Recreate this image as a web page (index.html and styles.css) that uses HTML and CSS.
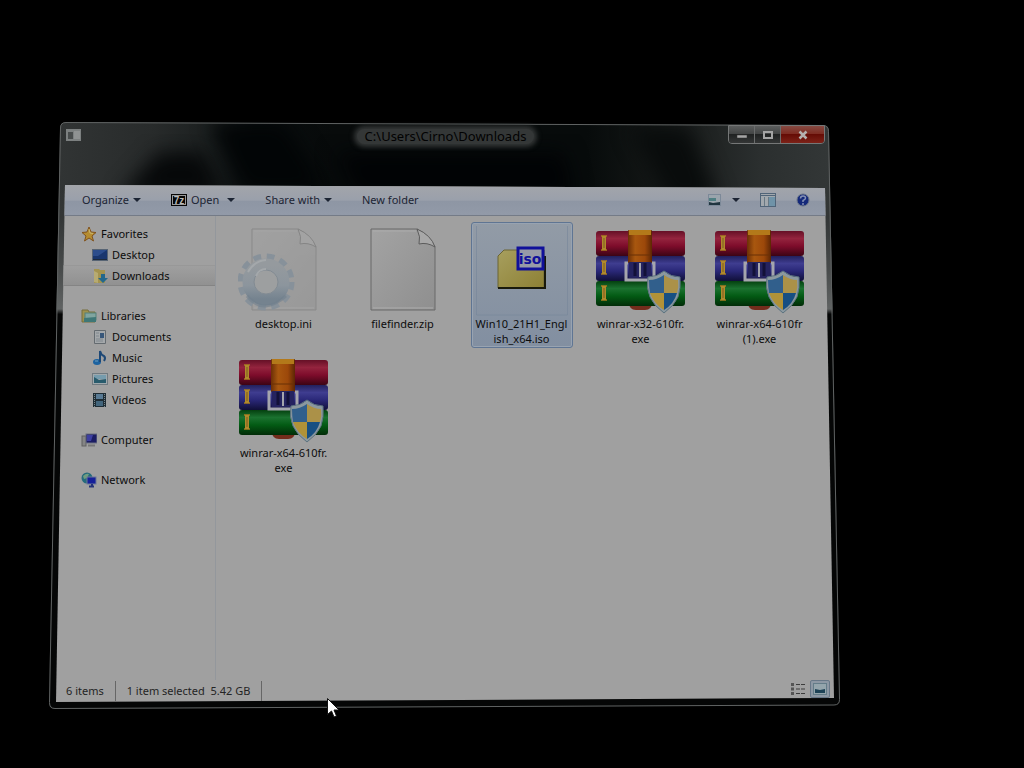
FILE: index.html
```
<!DOCTYPE html>
<html lang="en">

<head>
    <meta charset="UTF-8">
    <meta name="viewport" content="width=device-width, initial-scale=1.0">
    <title>Downloads</title>
    <link rel="stylesheet" href="styles.css">
</head>

<body>
    <!-- shared icons -->
    <svg class="defs" width="0" height="0" aria-hidden="true">
        <defs>
            <linearGradient id="red" x1="0" y1="0" x2="0" y2="1">
                <stop offset="0" stop-color="#651026" />
                <stop offset=".3" stop-color="#94243e" />
                <stop offset=".6" stop-color="#7e0c2b" />
                <stop offset="1" stop-color="#3c0414" />
            </linearGradient>
            <linearGradient id="blue" x1="0" y1="0" x2="0" y2="1">
                <stop offset="0" stop-color="#22205c" />
                <stop offset=".3" stop-color="#3f3d90" />
                <stop offset=".6" stop-color="#2a2878" />
                <stop offset="1" stop-color="#100f38" />
            </linearGradient>
            <linearGradient id="green" x1="0" y1="0" x2="0" y2="1">
                <stop offset="0" stop-color="#04400f" />
                <stop offset=".3" stop-color="#1b7230" />
                <stop offset=".6" stop-color="#035b14" />
                <stop offset="1" stop-color="#022c08" />
            </linearGradient>
            <linearGradient id="belt" x1="0" y1="0" x2="1" y2="0">
                <stop offset="0" stop-color="#6b2f06" />
                <stop offset=".3" stop-color="#a8570f" />
                <stop offset=".7" stop-color="#9c480a" />
                <stop offset="1" stop-color="#5c2604" />
            </linearGradient>
            <linearGradient id="paper" x1="0" y1="0" x2="1" y2="1">
                <stop offset="0" stop-color="#a3a3a3" />
                <stop offset="1" stop-color="#8f8f8f" />
            </linearGradient>
            <linearGradient id="gear" x1="0" y1="0" x2="0" y2="1">
                <stop offset="0" stop-color="#959a9e" />
                <stop offset=".6" stop-color="#8c959d" />
                <stop offset="1" stop-color="#75838f" />
            </linearGradient>
            <linearGradient id="folder" x1="0" y1="0" x2="1" y2="1">
                <stop offset="0" stop-color="#a79f5e" />
                <stop offset="1" stop-color="#8d8034" />
            </linearGradient>
            <symbol id="winrar" viewBox="0 0 92 90">
                <path d="M34 76h23q0 8-7 8h-9q-7 0-7-8z" fill="#742c1c" />
                <rect x="1" y="5" width="89" height="25" rx="3" fill="url(#red)" />
                <rect x="1" y="30" width="89" height="25" rx="3" fill="url(#blue)" />
                <rect x="1" y="55" width="89" height="25" rx="3" fill="url(#green)" />
                <path d="M6 10h6M6 24h6M6 35h6M6 48h6M6 60h6M6 74h6" stroke="#a87b20" stroke-width="1.5" />
                <path d="M9 10v14M9 35v13M9 60v14" stroke="#b08a2c" stroke-width="4" />
                <path d="M9 12v10M9 37v9M9 62v10" stroke="#7c5c20" />
                <rect x="33" y="4" width="24" height="33" rx="1" fill="url(#belt)" />
                <rect x="34" y="4" width="22" height="5" fill="#b3791a" />
                <path d="M34 29h22" stroke="#693006" />
                <rect x="34" y="36" width="22" height="16" fill="#25235f" />
                <path d="M33 37h-2v17h28V37h-2" fill="none" stroke="#a5a5ad" stroke-width="3" />
                <path d="M40 37v13M50 37v13" stroke="#131138" stroke-width="3" />
                <path d="M45 37v14" stroke="#a5a5ad" stroke-width="2" />
                <path d="M69 45q7 6 16 6 1 11-2 20-4 9-14 16-10-7-14-16-4-9-2-20 9 0 16-6z" fill="#8b989f" stroke="#5c7380" />
                <path d="M69 49v18H55q-1-6-1-13 8 0 15-5z" fill="#315f8c" />
                <path d="M69 49q7 5 14 5 1 7-1 13H69z" fill="#ab9148" />
                <path d="M55 67h14v17q-10-6-14-17z" fill="#b09238" />
                <path d="M69 67h13q-3 11-13 17z" fill="#174f82" />
            </symbol>
            <symbol id="sheet" viewBox="0 0 92 90">
                <path d="M14 3h46q12 6 18 18v63H14z" fill="url(#paper)" stroke="#686868" />
                <path d="M60 3q4 8 2 15 8-2 16 3-4-12-18-18z" fill="#a8a8a8" stroke="#5c5c5c" />
                <path d="M16 5h43M16 82h60" stroke="#acacac" />
            </symbol>
        </defs>
    </svg>

    <main class="window">
        <!-- glass frame -->
        <svg class="glass" viewBox="0 0 791 587" preserveAspectRatio="none" aria-hidden="true">
            <defs>
                <linearGradient id="glassFill" x1="0" y1="0" x2="1" y2="0">
                    <stop offset="0" stop-color="#323535" />
                    <stop offset=".13" stop-color="#282b2b" />
                    <stop offset=".2" stop-color="#1c2020" />
                    <stop offset=".26" stop-color="#0a0e0f" />
                    <stop offset=".36" stop-color="#080b0b" />
                    <stop offset=".68" stop-color="#070b0b" />
                    <stop offset=".78" stop-color="#161918" />
                    <stop offset=".9" stop-color="#2b2f2f" />
                    <stop offset="1" stop-color="#343838" />
                </linearGradient>
                <linearGradient id="side" x1="0" y1="0" x2="0" y2="1">
                    <stop offset="0" stop-color="#333636" stop-opacity="0" />
                    <stop offset=".06" stop-color="#333636" />
                    <stop offset=".16" stop-color="#484b4b" />
                    <stop offset=".235" stop-color="#606363" />
                    <stop offset=".245" stop-color="#050606" />
                    <stop offset="1" stop-color="#050606" />
                </linearGradient>
                <filter id="soft" x="-40%" y="-40%" width="180%" height="180%" color-interpolation-filters="sRGB">
                    <feGaussianBlur stdDeviation="10" />
                </filter>
                <clipPath id="frameClip">
                    <path d="M11 6q0-6 6-6l757 3q6 0 6 6l11 568q0 6-6 6l-779 4q-6 0-6-6z" />
                </clipPath>
            </defs>
            <g clip-path="url(#frameClip)">
                <rect width="791" height="587" fill="url(#glassFill)" />
                <path d="M70 75L110 30l45 0 20 45z" fill="#060809" filter="url(#soft)" />
                <path d="M160 0h75l45 70h-85z" fill="#020506" filter="url(#soft)" />
                <path d="M285 30h230l10 45h-215z" fill="#010305" filter="url(#soft)" />
                <path d="M670 80L640 5h-60l40 75z" fill="#090c0c" filter="url(#soft)" />
                <path d="M0 64h791v523H0z" fill="url(#side)" />
            </g>
            <path d="M11.500 6q0-5.500 5.500-5.500l757 3q5.500 0 5.500 6l11 568q0 5.500-5.500 5.500l-779 3.500q-5.500 0-5.500-6z" fill="none" stroke="#606363" />
        </svg>

        <header class="titlebar">
            <svg class="app-icon" width="15" height="12" viewBox="0 0 15 12" aria-hidden="true">
                <rect width="15" height="12" fill="#7c8080" />
                <rect x="2" y="3" width="5" height="7" fill="#484c4c" />
                <rect x="8" y="2" width="6" height="8" fill="#8f9292" />
            </svg>
            <h1 class="title">C:\Users\Cirno\Downloads</h1>
            <div class="controls">
                <button type="button" class="control" aria-label="Minimize">
                    <svg width="12" height="12" viewBox="0 0 12 12"><rect x="1" y="6" width="10" height="3" fill="#a4a4a4" stroke="#333" stroke-width=".5" /></svg>
                </button>
                <button type="button" class="control" aria-label="Maximize">
                    <svg width="12" height="12" viewBox="0 0 12 12"><rect x="2" y="3" width="8" height="6" fill="none" stroke="#a4a4a4" stroke-width="2" /></svg>
                </button>
                <button type="button" class="control close" aria-label="Close">
                    <svg width="12" height="12" viewBox="0 0 12 12"><path d="M2.500 2.500l7 7M9.500 2.500l-7 7" stroke="#b5b0ae" stroke-width="2.500" /></svg>
                </button>
            </div>
        </header>

        <div class="client">
            <div class="toolbar">
                <button type="button" class="tool organize">Organize <span class="arrow"></span></button>
                <button type="button" class="tool open">
                    <svg width="16" height="12" viewBox="0 0 16 12" aria-hidden="true">
                        <rect width="16" height="12" fill="#050505" />
                        <rect x="1.500" y="1.500" width="13" height="9" fill="none" stroke="#999" />
                        <text class="seven" x="8" y="9.500" text-anchor="middle">7z</text>
                    </svg>
                    Open <span class="arrow wide"></span>
                </button>
                <button type="button" class="tool share">Share with <span class="arrow"></span></button>
                <button type="button" class="tool">New folder</button>
                <div class="tool-right">
                    <button type="button" class="tool view" aria-label="Change your view">
                        <svg width="14" height="12" viewBox="0 0 14 12">
                            <rect x=".5" y=".5" width="12" height="11" fill="#9aa4ac" stroke="#7c8998" />
                            <rect x="1" y="4" width="7" height="3" fill="#4f7f82" />
                            <path d="M1 8l4 1 7-1v3H1z" fill="#1f343f" />
                        </svg>
                        <span class="arrow"></span>
                    </button>
                    <button type="button" class="tool" aria-label="Show the preview pane">
                        <svg width="16" height="14" viewBox="0 0 16 14">
                            <rect x=".5" y=".5" width="15" height="13" fill="#a2a8ad" stroke="#506478" />
                            <path d="M1 2.500h14" stroke="#506478" />
                            <rect x="9" y="4" width="6" height="9" fill="#6f93a8" />
                            <path d="M4.500 4v9M8.500 4v9" stroke="#687884" />
                        </svg>
                    </button>
                    <button type="button" class="tool" aria-label="Get help">
                        <svg width="14" height="14" viewBox="0 0 14 14">
                            <circle cx="7" cy="7" r="6" fill="#14297a" stroke="#6a7488" />
                            <path d="M4.500 5.500q0-2.500 2.500-2.500t2.500 2q0 1.500-2.500 2.500v1.500" fill="none" stroke="#8490b4" stroke-width="1.500" />
                            <circle cx="7" cy="11" r="1" fill="#8490b4" />
                        </svg>
                    </button>
                </div>
            </div>

            <div class="panes">
                <nav class="sidebar">
                    <ul class="group">
                        <li><a href="#" class="place root">
                            <svg width="16" height="16" viewBox="0 0 16 16"><path d="M8 1l2 5 5 .5-4 3.500 1.500 5L8 12l-4.500 3L5 10 1 6.500 6 6z" fill="#b58c30" stroke="#80521c" /><path d="M8 3l1 4 3 .5" fill="none" stroke="#c8b870" /></svg>
                            Favorites</a></li>
                        <li><a href="#" class="place">
                            <svg width="16" height="16" viewBox="0 0 16 16"><rect x=".5" y="2.500" width="15" height="11" fill="#19366e" stroke="#576474" /><path d="M1 3h14l-9 6H1z" fill="#2c4d8c" /><path d="M1 12.500h14" stroke="#1d2a3c" /></svg>
                            Desktop</a></li>
                        <li><a href="#" class="place current">
                            <svg width="16" height="16" viewBox="0 0 16 16"><path d="M2 1h5l1 1h5v13H2z" fill="#a39350" /><path d="M2 3l4 2v10l-4-1z" fill="#b7ab72" /><path d="M9 6h4v4h3l-5 5-5-5h3z" fill="#23688c" /></svg>
                            Downloads</a></li>
                    </ul>
                    <ul class="group">
                        <li><a href="#" class="place root">
                            <svg width="16" height="16" viewBox="0 0 16 16"><path d="M1 2h6l1 2h6v10H1z" fill="#9d914e" stroke="#776e3c" /><rect x="4" y="5" width="11" height="7" fill="#80a5a0" stroke="#548078" /><path d="M3 10l12-1v5H3z" fill="#3e7777" /></svg>
                            Libraries</a></li>
                        <li><a href="#" class="place">
                            <svg width="16" height="16" viewBox="0 0 16 16"><path d="M2.500 1.500h11v13h-11z" fill="#a4a8ab" stroke="#646b70" /><path d="M4 4h3M4 7h3M4 10h7M4 12h7" stroke="#80888e" /><rect x="8" y="4" width="4" height="5" fill="#38577a" /></svg>
                            Documents</a></li>
                        <li><a href="#" class="place">
                            <svg width="16" height="16" viewBox="0 0 16 16"><ellipse cx="5" cy="12" rx="4" ry="3" fill="#1c62a0" /><path d="M8 12V1q1 4 4 5 2 2 0 5" fill="none" stroke="#1d4876" stroke-width="2" /><path d="M3 11h3" stroke="#6f9fbd" /></svg>
                            Music</a></li>
                        <li><a href="#" class="place">
                            <svg width="16" height="16" viewBox="0 0 16 16"><rect x=".5" y="2.500" width="15" height="11" fill="#a0a9ad" stroke="#707a80" /><rect x="2" y="4" width="12" height="4" fill="#769cad" /><path d="M2 6l5 3 7-1v4H2z" fill="#285b6c" /></svg>
                            Pictures</a></li>
                        <li><a href="#" class="place">
                            <svg width="16" height="16" viewBox="0 0 16 16"><rect x="1" y="1" width="13" height="14" fill="#1e2c34" /><rect x="4" y="2" width="7" height="5" fill="#587a94" /><rect x="4" y="9" width="7" height="5" fill="#42657c" /><path d="M2.500 2v13M12.500 2v13" stroke="#78868c" stroke-dasharray="1 1" /></svg>
                            Videos</a></li>
                    </ul>
                    <ul class="group">
                        <li><a href="#" class="place root">
                            <svg width="16" height="16" viewBox="0 0 16 16"><rect x="1" y="4" width="4" height="10" fill="#858585" stroke="#606060" /><rect x="5" y="2" width="11" height="9" fill="#1b1c64" stroke="#6b6f80" /><path d="M6 3h6l-2 6H6z" fill="#3d3fa0" /><path d="M7 13.500h7" stroke="#777" stroke-width="2" /></svg>
                            Computer</a></li>
                    </ul>
                    <ul class="group">
                        <li><a href="#" class="place root">
                            <svg width="16" height="16" viewBox="0 0 16 16"><circle cx="6" cy="6" r="5.500" fill="#266b7c" /><path d="M2 4q3-3 6-2l-2 4-3 1z" fill="#709d80" /><rect x="6" y="5" width="9" height="7" fill="#16209a" stroke="#6c7898" /><path d="M11 12v3M8 14.500h5" stroke="#253478" stroke-width="2" /></svg>
                            Network</a></li>
                    </ul>
                </nav>

                <ul class="files">
                    <li><button type="button" class="file">
                        <svg width="92" height="90" viewBox="0 0 92 90">
                            <g opacity=".4"><use href="#sheet" width="92" height="90" /></g>
                            <circle cx="28" cy="56" r="25" fill="none" stroke="#87919a" stroke-width="7" stroke-dasharray="7.500 5.590" />
                            <circle cx="28" cy="56" r="17" fill="none" stroke="url(#gear)" stroke-width="13" />
                            <circle cx="28" cy="56" r="12" fill="#9d9fa0" stroke="#828b93" />
                            <path d="M9 70q9 11 19 10t20-10" fill="none" stroke="#71808e" stroke-width="3" opacity=".6" />
                            <path d="M10 46q6-11 18-12M18 50q3-7 10-7" fill="none" stroke="#a4a8ab" stroke-width="2" />
                        </svg>
                        desktop.ini</button></li>
                    <li><button type="button" class="file">
                        <svg width="92" height="90"><use href="#sheet" /></svg>
                        filefinder.zip</button></li>
                    <li><button type="button" class="file selected">
                        <svg width="92" height="90" viewBox="0 0 92 90">
                            <path d="M.5 -1v90h91V-1" fill="none" stroke="#77869a" opacity=".6" />
                            <path d="M22 30l6-6h40v38H22z" fill="url(#folder)" stroke="#6a6434" />
                            <path d="M22 62h47V30" fill="none" stroke="#191a0c" stroke-width="2" />
                            <rect x="42" y="22" width="25" height="21" fill="#979aa7" stroke="#10109a" stroke-width="3" />
                            <text class="iso" x="54" y="38" text-anchor="middle">iso</text>
                        </svg>
                        Win10_21H1_Engl<br>ish_x64.iso</button></li>
                    <li><button type="button" class="file">
                        <svg width="92" height="90"><use href="#winrar" /></svg>
                        winrar-x32-610fr.<br>exe</button></li>
                    <li><button type="button" class="file">
                        <svg width="92" height="90"><use href="#winrar" /></svg>
                        winrar-x64-610fr<br>(1).exe</button></li>
                    <li><button type="button" class="file">
                        <svg width="92" height="90"><use href="#winrar" /></svg>
                        winrar-x64-610fr.<br>exe</button></li>
                </ul>
            </div>

            <footer class="status">
                <span class="cell">6 items</span>
                <span class="cell">1 item selected&nbsp; 5.42 GB</span>
                <div class="modes">
                    <button type="button" class="mode" aria-label="Details">
                        <svg width="16" height="14" viewBox="0 0 16 14">
                            <path d="M2.500 1v12" stroke="#555" stroke-width="3" stroke-dasharray="3 1.500" />
                            <path d="M6 2.500h4M11 2.500h4M6 7h4M11 7h4M6 11.500h4M11 11.500h4" stroke="#3c3c3c" />
                        </svg>
                    </button>
                    <button type="button" class="mode active" aria-label="Large thumbnails">
                        <svg width="14" height="12" viewBox="0 0 14 12">
                            <rect x=".5" y=".5" width="13" height="11" fill="#94a5ac" stroke="#647c88" />
                            <path d="M2 6l5 1 5-1v4H2z" fill="#1d4256" />
                        </svg>
                    </button>
                </div>
            </footer>
        </div>
    </main>

    <svg class="cursor" width="13" height="20" viewBox="0 0 13 20" aria-hidden="true">
        <path d="M.5 .5v16l4-3.500 2.500 6 2.500-1-2.500-6h5z" fill="#fff" stroke="#111" />
    </svg>
</body>

</html>
```
FILE: styles.css
```
* {
    box-sizing: border-box;
}
body {
    margin: 0;
    min-height: 100vh;
    padding: 122px 184px 59px 49px;
    display: flex;
    background: #000;
    font-family: "Noto Sans", "Open Sans", sans-serif;
    font-size: 11px;
    color: #0c0c0c;
}
button {
    margin: 0;
    padding: 0;
    border: none;
    background: none;
    font: inherit;
    color: inherit;
}
ul {
    margin: 0;
    padding: 0;
    list-style: none;
}
svg {
    flex: none;
}
.defs {
    position: absolute;
}
.window {
    position: relative;
    flex: 1;
    min-width: 0;
    display: flex;
    flex-direction: column;
    padding: 0 6px 7px 7px;
}
/* frame is drawn behind the content */
.glass {
    position: absolute;
    top: 0;
    left: 0;
    width: 100%;
    height: 100%;
}

/* title bar */
.titlebar {
    position: relative;
    display: grid;
    grid-template-columns: 1fr auto 1fr;
    align-items: start;
    height: 63px;
    padding: 3px 9px 0 10px;
}
.app-icon {
    margin-top: 4px;
}
.title {
    margin: 4px 0 0;
    padding: 0 8px;
    font-size: 13px;
    line-height: 15px;
    font-weight: normal;
    color: #020202;
    background: #343737;
    border-radius: 8px;
    box-shadow: 0 0 5px 3px #343737;
}
.controls {
    display: flex;
    justify-self: end;
    border: 1px solid #757777;
    border-radius: 0 0 4px 4px;
    overflow: hidden;
}
.control {
    display: grid;
    place-items: center;
    width: 26px;
    height: 17px;
    border-right: 1px solid #6a6c6c;
    background: linear-gradient(#5b5d5d, #424444 48%, #202222 50%, #343636);
}
.close {
    width: 43px;
    border-right: none;
    background: linear-gradient(#864a42, #7d2a20 48%, #650c05 50%, #7c2218);
}

/* client area, wider at the bottom than at the top */
.client {
    position: relative;
    flex: 1;
    display: flex;
    flex-direction: column;
    background: #a0a0a0;
    clip-path: polygon(9px 0, calc(100% - 9px) 3px, 100% calc(100% - 4px), 0 100%);
}
.toolbar {
    display: flex;
    align-items: center;
    height: 31px;
    padding: 0 24px 1px 26px;
    background: linear-gradient(#a3a5aa, #9aa0ab 50%, #8e96a4 55%, #929aa8);
    border-bottom: 1px solid #747b87;
    color: #1c2433;
}
.tool {
    display: flex;
    align-items: center;
    gap: 4px;
    white-space: nowrap;
}
.organize,
.open,
.share {
    margin-right: 30px;
}
.arrow {
    border: 4px solid transparent;
    border-top-color: #1c2433;
    border-bottom: none;
}
.wide {
    margin-left: 4px;
}
.tool-right {
    display: flex;
    align-items: center;
    gap: 20px;
    margin-left: auto;
}
.view {
    gap: 10px;
}
.seven {
    font-family: "Liberation Sans", sans-serif;
    font-size: 10px;
    font-weight: bold;
    fill: #bbb;
}

/* panes */
.panes {
    flex: 1;
    display: flex;
}
.sidebar {
    flex: none;
    width: 160px;
    padding-top: 7px;
    border-right: 1px solid #93979c;
}
.group {
    margin-bottom: 19px;
}
.place {
    display: flex;
    align-items: center;
    gap: 4px;
    height: 21px;
    padding-left: 36px;
    border: 1px solid transparent;
    border-width: 1px 0;
    color: inherit;
    text-decoration: none;
}
.root {
    padding-left: 25px;
}
.current {
    background: linear-gradient(#9f9f9f, #919191);
    border-color: #989898 #989898 #848484;
}
.files {
    flex: 1;
    display: grid;
    grid-template-columns: repeat(auto-fill, 119px);
    align-content: start;
    justify-items: center;
    row-gap: 3px;
    padding: 6px 0 0 8px;
}
.file {
    display: flex;
    flex-direction: column;
    align-items: center;
    width: 102px;
    height: 126px;
    padding-top: 3px;
    border: 1px solid transparent;
    border-radius: 3px;
    line-height: 15px;
    white-space: nowrap;
}
.selected {
    background: linear-gradient(#929ba6, #828fa1);
    border-color: #5f7593;
    box-shadow: inset 0 0 0 1px #98a3b1;
}
.iso {
    font-family: "DejaVu Sans", sans-serif;
    font-size: 14px;
    font-weight: bold;
    fill: #10109a;
}

/* status bar */
.status {
    display: flex;
    align-items: center;
    height: 22px;
    padding: 0 4px 0 10px;
    color: #242424;
}
.cell {
    margin-right: 11px;
    padding-right: 11px;
    line-height: 20px;
    border-right: 1px solid #666;
}
.modes {
    display: flex;
    align-items: center;
    gap: 4px;
    margin: 0 0 5px auto;
}
.mode {
    display: grid;
    place-items: center;
    height: 18px;
}
.active {
    width: 20px;
    background: #8d98a4;
    border: 1px solid #687888;
    border-radius: 2px;
}

.cursor {
    position: absolute;
    top: 698px;
    left: 327px;
}
```
